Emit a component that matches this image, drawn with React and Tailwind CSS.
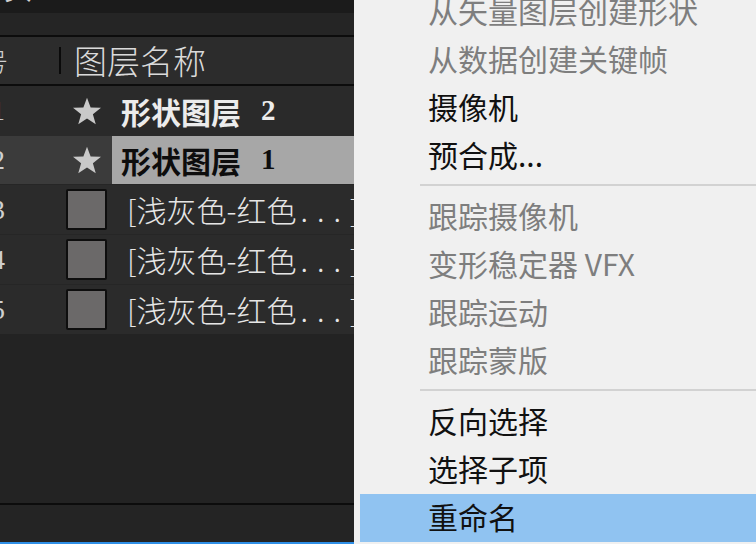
import React from "react";

const cjk = { fontFamily: '"Noto Sans CJK SC", "Noto Sans", sans-serif' };
const serifDigits = { fontFamily: '"Liberation Serif", "Noto Sans CJK SC", serif' };

function Star() {
  return (
    <svg width="30" height="29" viewBox="0 0 24 23" className="shrink-0">
      <polygon
        points="12,0.5 14.9,8.2 23.2,8.5 16.7,13.6 19,21.6 12,17 5,21.6 7.3,13.6 0.8,8.5 9.1,8.2"
        fill="#c9c9c9"
      />
    </svg>
  );
}

function Num({ n }) {
  return (
    <div className="w-[60px] shrink-0 overflow-hidden flex items-center">
      <span className="-ml-[9px] text-[28px] text-[#cfcfcf]" style={serifDigits}>
        {n}
      </span>
    </div>
  );
}

function ShapeRow({ n, label, selected, bg }) {
  return (
    <div className={`flex items-stretch ${bg}`}>
      <div className={`flex items-center ${selected ? "bg-[#3b3b3b]" : ""} w-[112px] shrink-0`}>
        <Num n={n} />
        <div className="pl-[12px]">
          <Star />
        </div>
      </div>
      <div
        className={`flex-1 flex items-center pl-[9px] ${selected ? "bg-[#a7a7a7] text-[#0d0d0d]" : "text-[#ececec]"}`}
      >
        <span className="text-[30px] font-semibold whitespace-nowrap" style={cjk}>
          {label}
        </span>
        <span className="ml-[20px] text-[29px] font-bold" style={serifDigits}>
          {selected ? "1" : "2"}
        </span>
      </div>
    </div>
  );
}

function SolidRow({ n }) {
  return (
    <div className="h-[50px] flex items-center bg-[#2b2b2b] border-t border-[#262626]">
      <div className="w-[66px] shrink-0 flex items-center">
        <Num n={n} />
      </div>
      <div className="w-[41px] h-[41px] shrink-0 bg-[#6b6969] border-2 border-[#0e0e0e] rounded-[2px]" />
      <div className="ml-[20px] whitespace-nowrap overflow-hidden text-[#e6e6e6] text-[30px] font-light" style={cjk}>
        [浅灰色-红色<span className="ml-[4px] tracking-[9px]">...</span>]
      </div>
    </div>
  );
}

function Item({ label, disabled, active }) {
  return (
    <div
      className={`h-[48px] shrink-0 flex items-center ml-[6px] pl-[68px] pb-[3px] ${active ? "bg-[#90c3f1]" : ""}`}
    >
      <span
        className={`text-[30px] whitespace-nowrap ${disabled ? "text-[#7e7e7e]" : "text-[#111111]"}`}
        style={cjk}
      >
        {label}
      </span>
    </div>
  );
}

function Sep() {
  return (
    <div className="h-[13px] shrink-0 flex flex-col justify-center pl-[66px] pb-[3px]">
      <div className="h-[2px] bg-[#d2d2d2]" />
    </div>
  );
}

export default function App() {
  return (
    <div className="w-[756px] h-[544px] flex overflow-hidden bg-[#f0f0f0]" style={cjk}>
      {/* Left layer panel */}
      <div className="w-[354px] shrink-0 h-full flex flex-col bg-[#222222] overflow-hidden">
        <div className="h-[13px] shrink-0 bg-[#1b1b1b] overflow-hidden">
          <div className="-mt-[33px] ml-[4px] text-[28px] text-[#cfcfcf]">头</div>
        </div>
        <div className="h-[22px] shrink-0 bg-[#252525]" />
        <div className="h-[2px] shrink-0 bg-[#0c0c0c]" />
        <div className="h-[47px] shrink-0 bg-[#2c2c2c] flex items-center">
          <div className="w-[59px] shrink-0 overflow-hidden flex items-center">
            <span className="-ml-[18px] text-[26px] text-[#cfcfcf] font-light">号</span>
          </div>
          <div className="w-[2px] h-[27px] bg-[#0a0a0a] shrink-0" />
          <span className="ml-[13px] text-[33px] text-[#dadada] font-light whitespace-nowrap">图层名称</span>
        </div>
        <div className="h-[2px] shrink-0 bg-[#0c0c0c]" />
        <div className="h-[50px] shrink-0 flex flex-col">
          <ShapeRow n="1" label="形状图层" bg="bg-[#2a2a2a] h-[50px]" />
        </div>
        <div className="h-[48px] shrink-0 flex flex-col">
          <ShapeRow n="2" label="形状图层" selected bg="h-[48px]" />
        </div>
        <SolidRow n="3" />
        <SolidRow n="4" />
        <SolidRow n="5" />
        <div className="flex-1 bg-[#232323]" />
        <div className="h-[2px] shrink-0 bg-[#0c0c0c]" />
        <div className="h-[37px] shrink-0 bg-[#242424]" />
        <div className="h-[2px] shrink-0 bg-[#2f8fe6]" />
      </div>

      {/* Context menu */}
      <div className="flex-1 h-full bg-[#f0f0f0] flex flex-col overflow-hidden">
        <div className="-mt-[12px] flex flex-col">
          <Item label="从矢量图层创建形状" disabled />
          <Item label="从数据创建关键帧" disabled />
          <Item label="摄像机" />
          <Item label="预合成..." />
          <Sep />
          <Item label="跟踪摄像机" disabled />
          <Item label="变形稳定器 VFX" disabled />
          <Item label="跟踪运动" disabled />
          <Item label="跟踪蒙版" disabled />
          <Sep />
          <Item label="反向选择" />
          <Item label="选择子项" />
          <Item label="重命名" active />
        </div>
      </div>
    </div>
  );
}
